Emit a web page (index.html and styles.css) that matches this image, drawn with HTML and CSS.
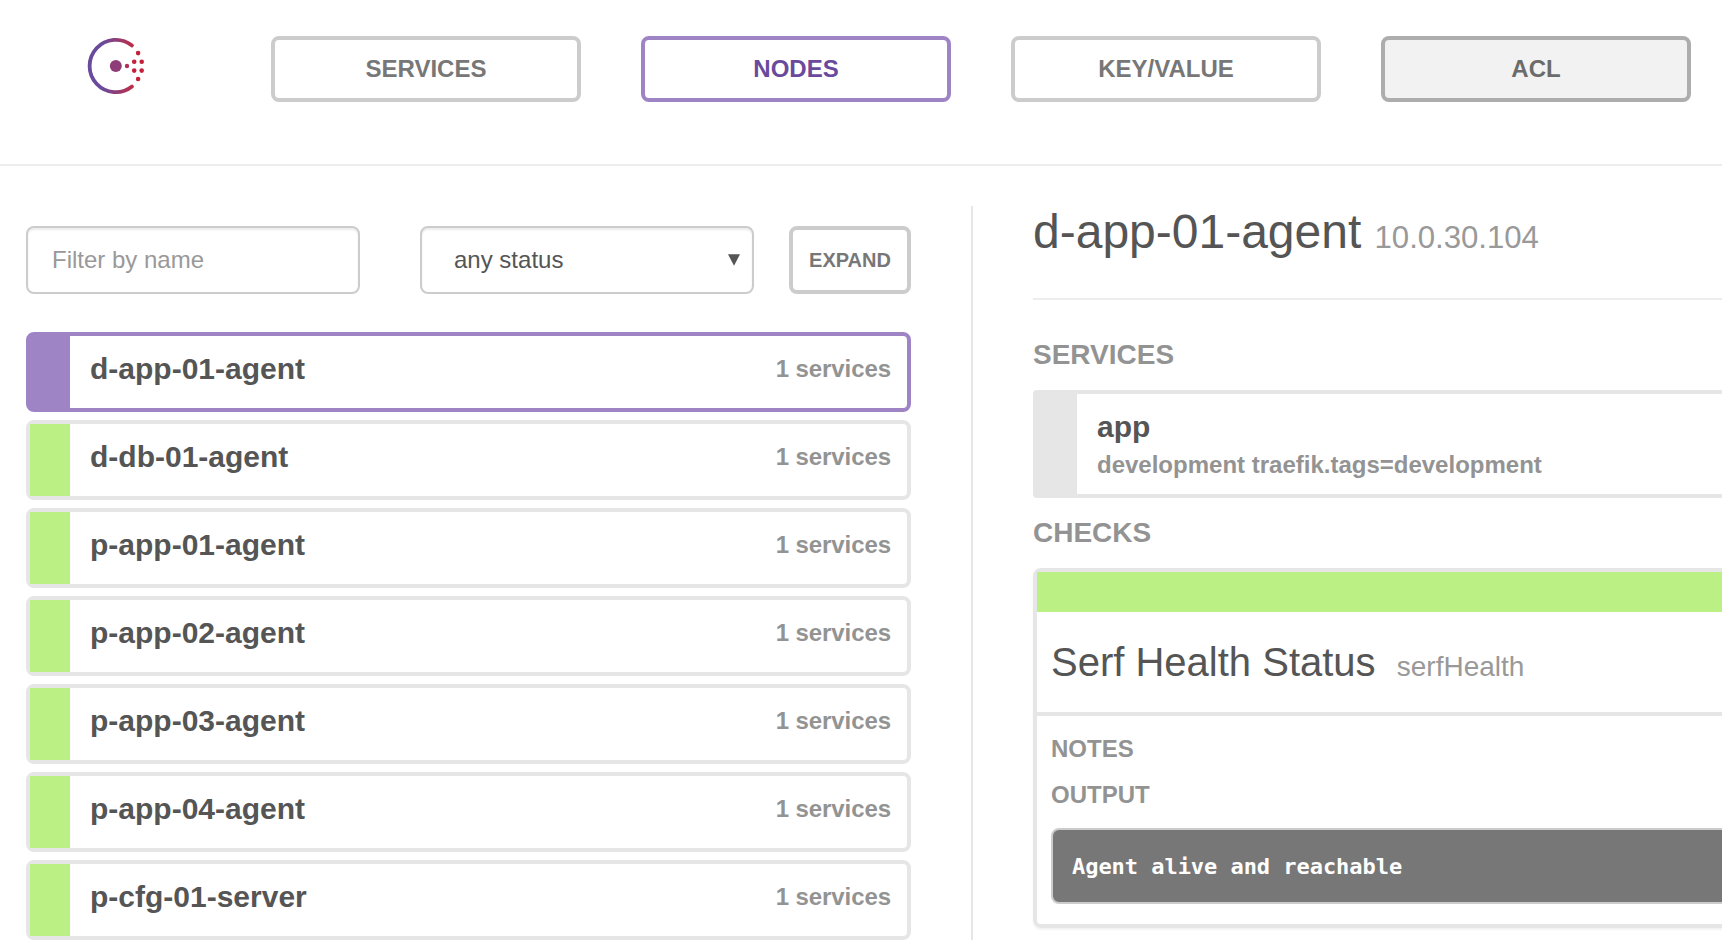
FILE: index.html
```html
<!DOCTYPE html>
<html lang="en">
<head>
<meta charset="utf-8">
<title>Consul</title>
<link rel="stylesheet" href="styles.css">
</head>
<body>
<header class="topbar">
  <a class="logo" href="#" aria-label="Consul">
    <svg width="60" height="60" viewBox="0 0 60 60">
      <defs>
        <linearGradient id="brand" gradientUnits="userSpaceOnUse" x1="2" y1="0" x2="50" y2="0">
          <stop offset="0" stop-color="#694a9c"/>
          <stop offset="0.3" stop-color="#694a9c"/>
          <stop offset="1" stop-color="#c62a40"/>
        </linearGradient>
      </defs>
      <path d="M46 9.4A26.2 26.2 0 1 0 46 50.6" fill="none" stroke="url(#brand)" stroke-width="3.8" stroke-linecap="round"/>
      <circle cx="29.8" cy="30" r="6" fill="#8f3d78"/>
      <circle cx="41" cy="30" r="2.2" fill="#b03058"/>
      <g fill="#c5203a">
        <circle cx="48.2" cy="25.7" r="2.3"/>
        <circle cx="55.7" cy="25.7" r="2.3"/>
        <circle cx="48.2" cy="34.6" r="2.3"/>
        <circle cx="55.7" cy="34.6" r="2.3"/>
        <circle cx="52.1" cy="17.1" r="2.3"/>
        <circle cx="52.1" cy="43" r="2.3"/>
      </g>
    </svg>
  </a>
  <nav class="nav">
    <a class="nav-item" href="#">SERVICES</a>
    <a class="nav-item active" href="#">NODES</a>
    <a class="nav-item" href="#">KEY/VALUE</a>
    <a class="nav-item hover" href="#">ACL</a>
  </nav>
</header>
<main class="content">
  <section class="list-pane">
    <div class="filters">
      <input class="field" type="text" placeholder="Filter by name">
      <div class="field status" role="combobox">
        <span>any status</span>
        <svg width="12" height="12" viewBox="0 0 12 12"><path d="M0 0.3H12L6 11.7Z" fill="#555"/></svg>
      </div>
      <button class="expand" type="button">EXPAND</button>
    </div>
    <div class="rows">
      <a class="row selected" href="#"><span class="bar"></span><span class="name">d-app-01-agent</span><span class="count">1 services</span></a>
      <a class="row" href="#"><span class="bar"></span><span class="name">d-db-01-agent</span><span class="count">1 services</span></a>
      <a class="row" href="#"><span class="bar"></span><span class="name">p-app-01-agent</span><span class="count">1 services</span></a>
      <a class="row" href="#"><span class="bar"></span><span class="name">p-app-02-agent</span><span class="count">1 services</span></a>
      <a class="row" href="#"><span class="bar"></span><span class="name">p-app-03-agent</span><span class="count">1 services</span></a>
      <a class="row" href="#"><span class="bar"></span><span class="name">p-app-04-agent</span><span class="count">1 services</span></a>
      <a class="row" href="#"><span class="bar"></span><span class="name">p-cfg-01-server</span><span class="count">1 services</span></a>
    </div>
  </section>
  <section class="detail-pane">
    <h1 class="title">d-app-01-agent <small>10.0.30.104</small></h1>
    <h2 class="heading">SERVICES</h2>
    <a class="service" href="#">
      <span class="service-bar"></span>
      <span class="service-text">
        <span class="service-name">app</span>
        <span class="service-tags">development traefik.tags=development</span>
      </span>
    </a>
    <h2 class="heading checks">CHECKS</h2>
    <article class="check">
      <div class="check-bar"></div>
      <h3 class="check-title">Serf Health Status <small>serfHealth</small></h3>
      <div class="check-body">
        <h4 class="label">NOTES</h4>
        <h4 class="label">OUTPUT</h4>
        <pre class="output">Agent alive and reachable</pre>
      </div>
    </article>
  </section>
</main>
</body>
</html>
```
FILE: styles.css
```css
* {
  box-sizing: border-box;
}

body {
  margin: 0;
  height: 940px;
  overflow: hidden;
  display: flex;
  flex-direction: column;
  background: #fff;
  color: #555;
  font-family: "Liberation Sans", Arial, sans-serif;
  font-size: 24px;
}

a {
  color: inherit;
  text-decoration: none;
}

h1, h2, h3, h4, pre {
  margin: 0;
}

/* Header */
.topbar {
  flex: none;
  display: flex;
  height: 166px;
  padding: 36px 31px 0 86px;
  border-bottom: 2px solid #ededed;
}

.logo {
  width: 185px;
  height: 60px;
}

.logo svg {
  display: block;
}

.nav {
  flex: 1;
  display: flex;
  gap: 60px;
}

.nav-item {
  flex: 1;
  height: 66px;
  border: 4px solid #ccc;
  border-radius: 8px;
  color: #777;
  font-weight: bold;
  line-height: 58px;
  text-align: center;
}

.nav-item.active {
  border-color: #9f84c5;
  color: #694a9c;
}

.nav-item.hover {
  border-color: #adadad;
  background: #f2f2f2;
  color: #6b6b6b;
}

/* Node list */
.content {
  flex: 1;
  display: flex;
  min-height: 0;
  padding-top: 40px;
}

.list-pane {
  flex: none;
  width: 973px;
  padding: 20px 60px 0 26px;
  border-right: 2px solid #e6e6e6;
  overflow: hidden;
}

.filters {
  display: flex;
  margin-bottom: 38px;
}

.field {
  width: 334px;
  height: 68px;
  margin-right: 60px;
  padding: 0 24px;
  border: 2px solid #ccc;
  border-radius: 8px;
  background: #fff;
  box-shadow: inset 0 2px 2px rgba(0, 0, 0, 0.075);
  color: #555;
  font: 24px "Liberation Sans", Arial, sans-serif;
}

.field::placeholder {
  color: #999;
  opacity: 1;
}

.status {
  display: flex;
  align-items: center;
  justify-content: space-between;
  margin-right: 35px;
  padding: 0 12px 0 32px;
}

.expand {
  width: 122px;
  height: 68px;
  padding: 0;
  border: 4px solid #ccc;
  border-radius: 8px;
  background: #fff;
  color: #777;
  font: bold 20px "Liberation Sans", Arial, sans-serif;
}

.rows {
  display: flex;
  flex-direction: column;
  gap: 8px;
}

.row {
  flex: none;
  display: flex;
  height: 80px;
  padding-right: 16px;
  border: 4px solid #e6e6e6;
  border-radius: 8px;
  font-weight: bold;
  line-height: 65px;
}

.bar {
  width: 40px;
  background: #bbf085;
}

.selected {
  border-color: #9f84c5;
}

.selected .bar {
  background: #9f84c5;
}

.name {
  flex: 1;
  padding-left: 20px;
  font-size: 30px;
}

.count {
  color: #939393;
  letter-spacing: -0.08px;
}

/* Node detail */
.detail-pane {
  flex: 1;
  min-width: 0;
  padding-left: 60px;
}

.title {
  height: 94px;
  border-bottom: 2px solid #ededed;
  font-size: 48px;
  font-weight: normal;
  line-height: 52px;
}

.title small {
  color: #999;
  font-size: 31.2px;
  letter-spacing: -0.05px;
}

.heading {
  margin: 39px 0 19px;
  color: #939393;
  font-size: 28px;
  line-height: 32px;
}

.heading.checks {
  margin-top: 19px;
}

.service {
  display: flex;
  width: 720px;
  height: 108px;
  border: 4px solid #e6e6e6;
  border-radius: 4px;
  font-weight: bold;
}

.service-bar {
  width: 40px;
  background: #e6e6e6;
}

.service-text {
  display: flex;
  flex-direction: column;
  padding: 15px 0 0 20px;
}

.service-name {
  font-size: 30px;
  line-height: 36px;
}

.service-tags {
  color: #939393;
  line-height: 40px;
}

.check {
  width: 720px;
  height: 360px;
  border: 4px solid #e6e6e6;
  border-radius: 8px;
  box-shadow: 0 2px 2px rgba(0, 0, 0, 0.05);
}

.check-bar {
  height: 40px;
  background: #bbf085;
}

.check-title {
  height: 104px;
  padding-left: 14px;
  border-bottom: 4px solid #e6e6e6;
  font-size: 40px;
  font-weight: normal;
  line-height: 100px;
}

.check-title small {
  margin-left: 10px;
  color: #999;
  font-size: 28px;
}

.check-body {
  padding: 10px 14px 0;
}

.label {
  color: #939393;
  font-size: 24px;
  line-height: 46px;
}

.output {
  margin-top: 10px;
  height: 76px;
  padding-left: 19px;
  border: 2px solid #ccc;
  border-radius: 8px;
  background: #777;
  color: #fff;
  font: bold 22px/74px "DejaVu Sans Mono", monospace;
  letter-spacing: -0.04px;
}
```
